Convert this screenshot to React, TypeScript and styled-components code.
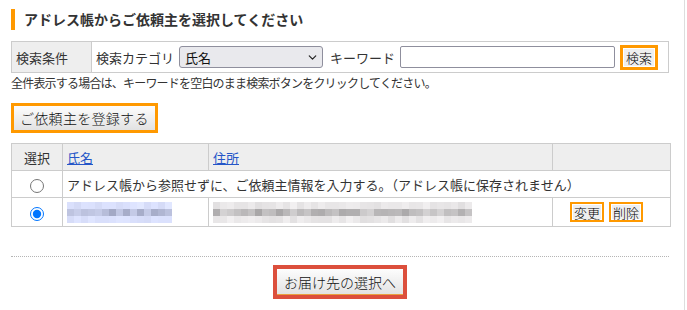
import React from 'react';
import styled, { createGlobalStyle } from 'styled-components';
import { ChevronDown } from 'lucide-react';

const GlobalStyle = createGlobalStyle`
  body {
    margin: 0;
    background: #fff;
    color: #333;
    font-family: "Noto Sans CJK JP", "Noto Sans", sans-serif;
  }
  * { box-sizing: border-box; }
`;

const Page = styled.div`
  width: 685px;
  min-height: 310px;
  padding: 9px 15px 12px 11px;
  border-right: 1px solid #ddd;
`;

const Title = styled.h2`
  margin: 0 0 11px;
  height: 21px;
  line-height: 21px;
  padding-left: 9px;
  border-left: 4px solid #f90;
  font-size: 14px;
  font-weight: bold;
  color: #333;
`;

const SearchBox = styled.div`
  display: flex;
  height: 32px;
  border: 1px solid #ccc;
  font-size: 13px;
`;

const SearchLabel = styled.div`
  width: 80px;
  padding-left: 4px;
  display: flex;
  align-items: center;
  background: #eee;
  border-right: 1px solid #ccc;
`;

const SearchFields = styled.div`
  flex: 1;
  display: flex;
  align-items: center;
  padding: 0 4px;
  gap: 5px;
`;

const SelectWrap = styled.div`
  position: relative;
  width: 144px;
  height: 22px;
  margin-right: 2px;
`;

const Select = styled.select`
  appearance: none;
  width: 100%;
  height: 100%;
  padding: 0 0 0 5px;
  background: #e9e9ed;
  border: 1px solid #8f8f9d;
  border-radius: 3px;
  font: inherit;
  font-size: 13px;
  color: #111;
`;

const SelectArrow = styled(ChevronDown)`
  position: absolute;
  right: 4px;
  top: 5px;
  pointer-events: none;
  color: #222;
`;

const KeywordInput = styled.input`
  width: 215px;
  height: 22px;
  border: 1px solid #8f8f9d;
  border-radius: 2px;
  background: #fff;
`;

const SmallButton = styled.button<{ $thick?: boolean }>`
  height: ${(p) => (p.$thick ? '25px' : '20px')};
  padding: 0 ${(p) => (p.$thick ? '3px' : '2px')};
  border: ${(p) => (p.$thick ? '3px' : '2px')} solid #f90;
  background: #efefef;
  font-family: "Noto Sans CJK JP", sans-serif;
  font-size: 13px;
  font-weight: 300;
  line-height: 1;
  color: #000;
  box-shadow: inset 0 0 0 1px #fff;
`;

const Note = styled.p`
  margin: 2px 0 0;
  font-size: 12px;
  line-height: 16px;
  letter-spacing: -0.8px;
  color: #333;
`;

const BigButton = styled.button<{ $tone: 'orange' | 'red' }>`
  display: block;
  height: ${(p) => (p.$tone === 'red' ? '34px' : '30px')};
  padding: 0 ${(p) => (p.$tone === 'red' ? '7px' : '6px')};
  border: ${(p) => (p.$tone === 'red' ? '4px solid #dc4f3c' : '3px solid #f90')};
  background: linear-gradient(#fdfdfd, #e2e2e2);
  font-family: "Noto Sans CJK JP", sans-serif;
  font-size: 14px;
  font-weight: 300;
  color: #111;
  letter-spacing: ${(p) => (p.$tone === 'red' ? '0' : '0.3px')};
  box-shadow: ${(p) => (p.$tone === 'red' ? 'inset 0 -1px 0 #e9a040' : 'none')};
`;

const RegisterButton = styled(BigButton)`
  margin-top: 12px;
`;

const Table = styled.table`
  margin-top: 10px;
  width: 659px;
  border-collapse: collapse;
  font-size: 13px;
  table-layout: fixed;
`;

const Th = styled.th<{ $center?: boolean }>`
  height: 27px;
  padding: 0 4px;
  background: #eee;
  border: 1px solid #ccc;
  font-weight: normal;
  text-align: ${(p) => (p.$center ? 'center' : 'left')};
`;

const Td = styled.td<{ $center?: boolean; $tall?: boolean }>`
  height: ${(p) => (p.$tall ? '29px' : '27px')};
  padding: 0 4px;
  border: 1px solid #ccc;
  text-align: ${(p) => (p.$center ? 'center' : 'left')};
  vertical-align: middle;
`;

const HeadLink = styled.a`
  color: #2456c8;
  text-decoration: underline;
`;

const Radio = styled.input`
  margin: 0;
  width: 14px;
  height: 14px;
  vertical-align: middle;
`;

const ButtonPair = styled.div`
  display: flex;
  justify-content: center;
  gap: 5px;
  padding-right: 10px;
`;

const MosaicGrid = styled.div<{ $cols: number }>`
  display: grid;
  grid-template-columns: repeat(${(p) => p.$cols}, 7px);
  grid-auto-rows: 7px;
  filter: blur(0.4px);
`;

const MosaicCell = styled.span`
  display: block;
`;

const Divider = styled.hr`
  margin: 29px 0 0;
  border: 0;
  border-top: 1px dotted #b5b5b5;
`;

const Footer = styled.div`
  display: flex;
  justify-content: center;
  padding-top: 8px;
`;

function rand(seed: number) {
  const x = Math.sin(seed * 12.9898) * 43758.5453;
  return x - Math.floor(x);
}

function Mosaic({ cols, hue, seed }: { cols: number; hue: 'blue' | 'gray'; seed: number }) {
  const cells = [];
  for (let r = 0; r < 3; r++) {
    for (let c = 0; c < cols; c++) {
      const v = rand(seed + r * 97 + c * 13);
      const strength = r === 1 ? 0.3 + v * 0.35 : 0.06 + v * 0.14;
      let color: string;
      if (hue === 'blue') {
        const l = Math.round(255 - strength * 110);
        color = `rgb(${l - 22}, ${l - 16}, ${Math.min(255, l + 12)})`;
      } else {
        const l = Math.round(250 - strength * 125);
        color = `rgb(${l}, ${l - 2}, ${l - 1})`;
      }
      cells.push(<MosaicCell key={`${r}-${c}`} style={{ background: color }} />);
    }
  }
  return <MosaicGrid $cols={cols}>{cells}</MosaicGrid>;
}

export default function App() {
  const [selected, setSelected] = React.useState('book');
  const [keyword, setKeyword] = React.useState('');

  return (
    <Page>
      <GlobalStyle />
      <Title>アドレス帳からご依頼主を選択してください</Title>

      <SearchBox>
        <SearchLabel>検索条件</SearchLabel>
        <SearchFields>
          <span>検索カテゴリ</span>
          <SelectWrap>
            <Select defaultValue="name">
              <option value="name">氏名</option>
              <option value="address">住所</option>
            </Select>
            <SelectArrow size={13} strokeWidth={2.2} />
          </SelectWrap>
          <span>キーワード</span>
          <KeywordInput value={keyword} onChange={(e) => setKeyword(e.target.value)} />
          <SmallButton $thick>検索</SmallButton>
        </SearchFields>
      </SearchBox>
      <Note>全件表示する場合は、キーワードを空白のまま検索ボタンをクリックしてください。</Note>

      <RegisterButton $tone="orange">ご依頼主を登録する</RegisterButton>

      <Table>
        <colgroup>
          <col style={{ width: 51 }} />
          <col style={{ width: 146 }} />
          <col style={{ width: 344 }} />
          <col style={{ width: 118 }} />
        </colgroup>
        <thead>
          <tr>
            <Th $center>選択</Th>
            <Th>
              <HeadLink href="#">氏名</HeadLink>
            </Th>
            <Th>
              <HeadLink href="#">住所</HeadLink>
            </Th>
            <Th />
          </tr>
        </thead>
        <tbody>
          <tr>
            <Td $center>
              <Radio
                type="radio"
                name="sender"
                checked={selected === 'new'}
                onChange={() => setSelected('new')}
              />
            </Td>
            <Td colSpan={3}>
              アドレス帳から参照せずに、ご依頼主情報を入力する。（アドレス帳に保存されません）
            </Td>
          </tr>
          <tr>
            <Td $center $tall>
              <Radio
                type="radio"
                name="sender"
                checked={selected === 'book'}
                onChange={() => setSelected('book')}
              />
            </Td>
            <Td $tall>
              <Mosaic cols={15} hue="blue" seed={3} />
            </Td>
            <Td $tall>
              <Mosaic cols={37} hue="gray" seed={41} />
            </Td>
            <Td $tall>
              <ButtonPair>
                <SmallButton>変更</SmallButton>
                <SmallButton>削除</SmallButton>
              </ButtonPair>
            </Td>
          </tr>
        </tbody>
      </Table>

      <Divider />
      <Footer>
        <BigButton $tone="red">お届け先の選択へ</BigButton>
      </Footer>
    </Page>
  );
}
